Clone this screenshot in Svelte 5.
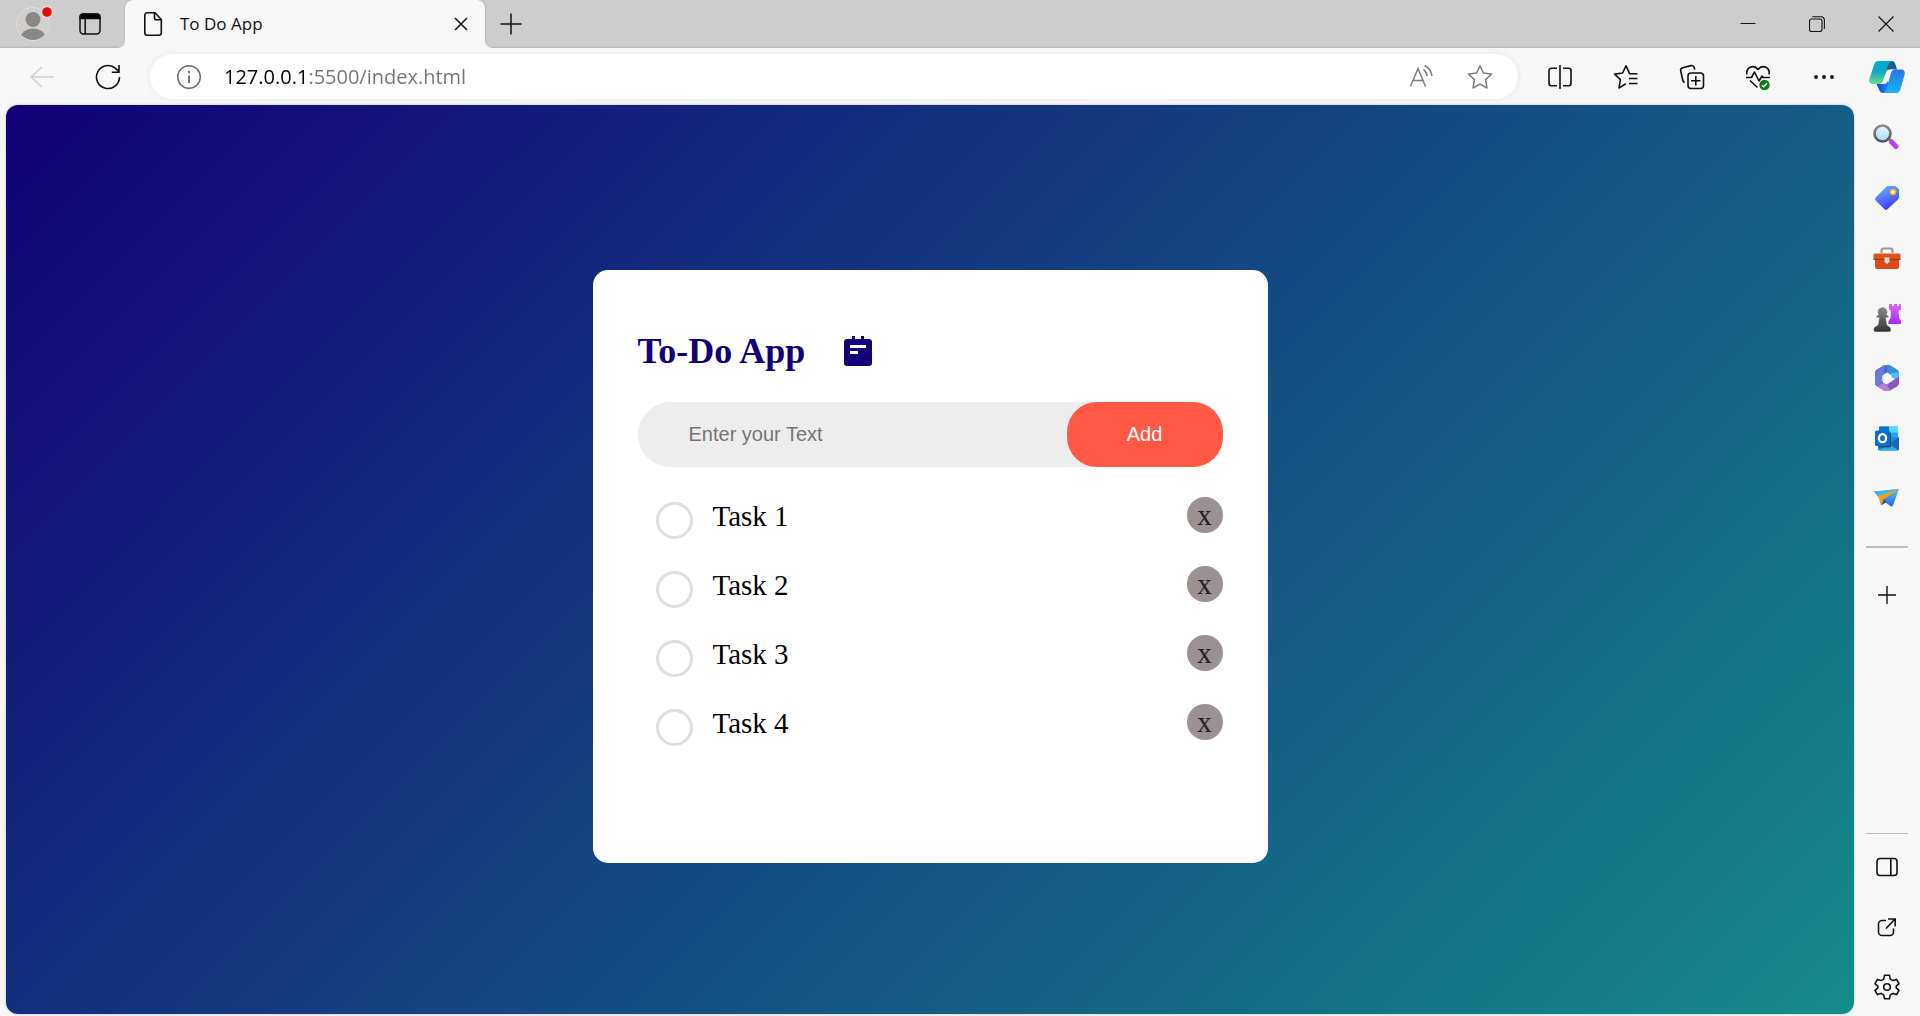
<script>
  let tasks = $state([
    { id: 1, title: 'Task 1', done: false },
    { id: 2, title: 'Task 2', done: false },
    { id: 3, title: 'Task 3', done: false },
    { id: 4, title: 'Task 4', done: false }
  ]);
  let draft = $state('');
  let address = $state('127.0.0.1:5500/index.html');

  function addTask(event) {
    event.preventDefault();
    const title = draft.trim();
    if (!title) return;
    tasks.push({ id: Date.now(), title, done: false });
    draft = '';
  }

  function removeTask(id) {
    tasks = tasks.filter((task) => task.id !== id);
  }
</script>

<div class="browser">
  <header class="tabstrip">
    <button class="profile" aria-label="Profile">
      <svg width="40" height="40" viewBox="0 0 40 40">
        <defs><clipPath id="face"><circle cx="20" cy="20" r="16" /></clipPath></defs>
        <circle cx="20" cy="20" r="16.5" fill="#d2d0cd" stroke="#dedddb" />
        <g clip-path="url(#face)" fill="#8a8886">
          <circle cx="20" cy="15.500" r="7.500" />
          <ellipse cx="20" cy="33.500" rx="12.500" ry="9" />
        </g>
        <circle cx="34" cy="8" r="6" fill="#f3dcdc" />
        <circle cx="34" cy="8" r="4.800" fill="#e00b0b" />
      </svg>
    </button>
    <button class="icon" aria-label="Tab actions">
      <svg width="24" height="24" viewBox="0 0 24 24" fill="none" stroke="#111" stroke-width="1.500">
        <rect x="2" y="2" width="20" height="20" rx="3.500" />
        <path d="M2 6.500V5a3 3 0 0 1 3-3h14a3 3 0 0 1 3 3v1.500z" fill="#000" />
        <path d="M7.200 7v15" />
      </svg>
    </button>
    <div class="tab">
      <svg width="24" height="26" viewBox="0 0 24 26" fill="none" stroke="#111" stroke-width="1.600" stroke-linejoin="round">
        <path d="M14 1.800H6A2.500 2.500 0 0 0 3.800 4v18A2.300 2.300 0 0 0 6 24.200h12a2.300 2.300 0 0 0 2.300-2.200V8.500z" />
        <path d="M13.500 2v5a1.800 1.800 0 0 0 1.800 1.800h5" />
      </svg>
      <span class="tab-title">To Do App</span>
      <button class="tab-close" aria-label="Close tab">
        <svg width="14" height="14" viewBox="0 0 14 14" fill="none" stroke="#111" stroke-width="1.500"><path d="M1 1l12 12M13 1L1 13" /></svg>
      </button>
    </div>
    <button class="new-tab" aria-label="New tab">
      <svg width="22" height="22" viewBox="0 0 22 22" fill="none" stroke="#111" stroke-width="1.500"><path d="M11 .5v21M.5 11h21" /></svg>
    </button>
    <div class="window-controls">
      <button aria-label="Minimize"><svg width="16" height="16" viewBox="0 0 16 16" stroke="#111" fill="none"><path d="M.5 7.500h15" /></svg></button>
      <button aria-label="Restore">
        <svg width="16" height="16" viewBox="0 0 16 16" stroke="#111" stroke-width="1.100" fill="none"><rect x=".5" y="3" width="12.500" height="12.500" rx="2" /><path d="M3.200.8h9a3.200 3.200 0 0 1 3.200 3.200v8.800" /></svg>
      </button>
      <button aria-label="Close"><svg width="16" height="16" viewBox="0 0 16 16" stroke="#111" stroke-width="1.200" fill="none"><path d="M.5.5l15 15M15.500.5l-15 15" /></svg></button>
    </div>
  </header>

  <nav class="toolbar">
    <button class="icon" aria-label="Back" disabled>
      <svg width="26" height="24" viewBox="0 0 26 24" fill="none" stroke="#cfcfcf" stroke-width="1.500"><path d="M13 2L2 12l11 10M2 12h23" /></svg>
    </button>
    <button class="icon" aria-label="Refresh">
      <svg width="26" height="26" viewBox="0 0 26 26" fill="none" stroke="#111" stroke-width="1.600"><path d="M24.500 13A11.500 11.500 0 1 1 20.500 4.300L24 7.600M24 1v7.200h-7.200" /></svg>
    </button>
    <div class="address">
      <button class="icon" aria-label="Site information">
        <svg width="26" height="26" viewBox="0 0 26 26" fill="none" stroke="#6c6c6c" stroke-width="1.500"><circle cx="13" cy="13" r="11.300" /><path d="M13 11.500v7.500" stroke-width="1.800" /><circle cx="13" cy="8" r="1.200" fill="#6c6c6c" stroke="none" /></svg>
      </button>
      <input class="url" type="text" aria-label="Address" bind:value={address} spellcheck="false" />
      <button class="icon" aria-label="Read aloud">
        <svg width="26" height="26" viewBox="0 0 26 26" fill="none" stroke="#7c7c7c" stroke-width="1.500"><path d="M2.500 22.500L10 4.500l7.500 18M5.200 16.500h9.600M15.500 5.700q3 1.800 3.600 6.300M16.500 1.500q6.500 3 7.500 10.500" /></svg>
      </button>
      <button class="icon" aria-label="Add to favorites">
        <svg width="26" height="26" viewBox="0 0 26 26" fill="none" stroke="#7c7c7c" stroke-width="1.500" stroke-linejoin="round"><path d="M13 1.800l3.400 7.200 8 1.100-5.800 5.500 1.400 8.400-7-3.900L6 24l1.400-8.400L1.600 10.100l8-1.100z" /></svg>
      </button>
    </div>
    <div class="tools">
      <button class="icon" aria-label="Split screen">
        <svg width="26" height="26" viewBox="0 0 26 26" fill="none" stroke="#111" stroke-width="1.600"><path d="M10 4.300H4.500a2.500 2.500 0 0 0-2.500 2.500v12.400a2.500 2.500 0 0 0 2.500 2.500H10M16 4.300h5.500A2.500 2.500 0 0 1 24 6.800v12.400a2.500 2.500 0 0 1-2.500 2.500H16M13 1v24" /></svg>
      </button>
      <button class="icon" aria-label="Favorites">
        <svg width="26" height="26" viewBox="0 0 26 26" fill="none" stroke="#111" stroke-width="1.600" stroke-linejoin="round"><path d="M24.500 9.800h-7.800L13 1.800 9.600 9l-8 1.100 5.800 5.500L6 24l6.800-4.200M16 14.500h8.500M16 19.500h8.500" /></svg>
      </button>
      <button class="icon" aria-label="Collections">
        <svg width="26" height="26" viewBox="0 0 26 26" fill="none" stroke="#111" stroke-width="1.600"><rect x="9" y="9" width="15.500" height="15.500" rx="3" /><path d="M16.800 12v9.500M12 16.800h9.500M5.500 18.500q-1.500-1-1.800-2.500L1.700 6.800A2.600 2.600 0 0 1 3.600 3.700L12 1.600a2.600 2.600 0 0 1 3.200 1.900l.5 2" /></svg>
      </button>
      <button class="icon" aria-label="Browser essentials">
        <svg width="26" height="26" viewBox="0 0 26 26" fill="none" stroke="#111" stroke-width="1.600" stroke-linejoin="round"><path d="M2 10.500C.5 4 8.500-.5 13 5.500 17.500-.5 25.500 4 24 10.500M1 13.500h5.500L9.500 8l4.500 9 3-5 1 1.500h7M5 16.500l7.500 7" /><circle cx="19.500" cy="21" r="5.200" fill="#107c10" stroke="none" /><path d="M17 21.200l1.700 1.600 3.300-3.500" stroke="#fff" stroke-width="1.400" /></svg>
      </button>
      <button class="icon" aria-label="Settings and more">
        <svg width="26" height="26" viewBox="0 0 26 26" fill="#111"><circle cx="5" cy="13" r="1.900" /><circle cx="13" cy="13" r="1.900" /><circle cx="21" cy="13" r="1.900" /></svg>
      </button>
    </div>
    <button class="icon copilot" aria-label="Copilot">
      <svg width="36" height="32" viewBox="0 0 36 32">
        <defs>
          <linearGradient id="cpA" x1="0" y1="0" x2="0" y2="1"><stop offset="0" stop-color="#04a9dc" /><stop offset=".45" stop-color="#12a5c8" /><stop offset="1" stop-color="#5fe08a" /></linearGradient>
          <linearGradient id="cpB" x1="0" y1="0" x2="0" y2="1"><stop offset="0" stop-color="#2477e0" /><stop offset="1" stop-color="#14b4fb" /></linearGradient>
          <linearGradient id="cpC" x1="0" y1="0" x2="1" y2="0"><stop offset="0" stop-color="#1743d5" /><stop offset="1" stop-color="#1b9cf5" /></linearGradient>
        </defs>
        <path d="M17 0h5.500a4 4 0 0 1 3.800 3L28 8.500h-5.500q-2.500 0-3.500 3L16 14z" fill="#125f88" />
        <path d="M7.500 23h6.500q3 0 4-4l5 7-4 6h-5a4 4 0 0 1-3.700-3z" fill="url(#cpC)" />
        <path d="M9 0h14q-3 .8-4 4l-4.500 15.500q-1.200 3.500-4.500 3.500H4Q-.5 23 .4 18L5 4Q6 0 9 0z" fill="url(#cpA)" />
        <path d="M27 32H14q2.500-.8 3.500-4L22 12q1-3.500 4.500-3.500h5.500q4.500 0 3.600 5L31.500 28q-1 4-4.500 4z" fill="url(#cpB)" />
        <path d="M19.500 8.500H24q-2 1-2.700 3.500L18.700 20q-1 3-4 3H9.500q3.500 0 4.700-3.500l3-9q.6-2 2.300-2z" fill="#f7f7f7" />
      </svg>
    </button>
  </nav>

  <div class="body">
    <main class="page">
      <section class="card">
        <h1 class="title">
          <span>To-Do App</span>
          <svg width="28" height="30" viewBox="0 0 28 30"><path fill="#120078" d="M8 0h3v3h6V0h3v3h5a3 3 0 0 1 3 3v21a3 3 0 0 1-3 3H3a3 3 0 0 1-3-3V6a3 3 0 0 1 3-3h5z" /><path fill="#fff" d="M6 9h16v3H6zM6 15h8v3H6z" /></svg>
        </h1>
        <form class="entry" onsubmit={addTask}>
          <input type="text" placeholder="Enter your Text" aria-label="Enter your Text" bind:value={draft} />
          <button type="submit">Add</button>
        </form>
        <ul class="tasks">
          {#each tasks as task (task.id)}
            <li>
              <input type="checkbox" id={`task-${task.id}`} bind:checked={task.done} />
              <label for={`task-${task.id}`}>{task.title}</label>
              <button class="remove" aria-label={`Remove ${task.title}`} onclick={() => removeTask(task.id)}>x</button>
            </li>
          {/each}
        </ul>
      </section>
    </main>

    <aside class="sidebar">
      <button aria-label="Search">
        <svg width="28" height="28" viewBox="0 0 28 28">
          <defs>
            <linearGradient id="lens" x1="0" y1="0" x2="0" y2="1"><stop offset="0" stop-color="#e8f5fd" /><stop offset="1" stop-color="#a9dbf7" /></linearGradient>
            <linearGradient id="ring" x1="0" y1="0" x2="0" y2="1"><stop offset="0" stop-color="#8a8a8a" /><stop offset="1" stop-color="#505050" /></linearGradient>
          </defs>
          <path d="M15 14l4 4" stroke="#777" stroke-width="3" />
          <path d="M18.500 18l4.500 4.500" stroke="#c03cf4" stroke-width="5" stroke-linecap="round" />
          <circle cx="9.500" cy="9.500" r="8" fill="url(#lens)" stroke="url(#ring)" stroke-width="2.600" />
        </svg>
      </button>
      <button aria-label="Shopping">
        <svg width="28" height="28" viewBox="0 0 28 28">
          <defs><linearGradient id="tag" x1=".2" y1="0" x2=".6" y2="1"><stop offset="0" stop-color="#66b2ff" /><stop offset="1" stop-color="#4436f5" /></linearGradient></defs>
          <path d="M15 2h7.500l3.500 3.500v7.500q0 1.500-1 2.500L14.500 25.300q-1.500 1.300-3 0L2.700 16.500q-1.500-1.500 0-3L13 3q.8-1 2-1z" fill="url(#tag)" />
          <circle cx="20" cy="8" r="2.400" fill="#fff" stroke="#f4bd1a" stroke-width="1.800" />
        </svg>
      </button>
      <button aria-label="Tools">
        <svg width="28" height="28" viewBox="0 0 28 28">
          <path d="M8.500 9V6.500q0-2 2-2h7q2 0 2 2V9" fill="none" stroke="#999" stroke-width="2.200" />
          <path d="M2 14h24v9q0 2-2 2H4q-2 0-2-2z" fill="#d9491d" />
          <path d="M2 9.500h24q1.500 0 1.500 1.500v4H.5v-4Q.5 9.500 2 9.500z" fill="#dc5717" />
          <path d="M.5 14.800h27v1.200H.5z" fill="#a83212" />
          <path d="M11.500 13.500h5V18l-2.500 2-2.500-2z" fill="#d5d8da" />
        </svg>
      </button>
      <button aria-label="Games">
        <svg width="28" height="28" viewBox="0 0 28 28">
          <defs>
            <linearGradient id="pawn" x1="0" y1="0" x2="0" y2="1"><stop offset="0" stop-color="#8c8c8c" /><stop offset="1" stop-color="#333" /></linearGradient>
            <linearGradient id="rook" x1="0" y1="0" x2="0" y2="1"><stop offset="0" stop-color="#d668f2" /><stop offset="1" stop-color="#a72af7" /></linearGradient>
          </defs>
          <path d="M16 0h3v2h2V0h3v2h2V0h2v5l-2.500 2 .5 7 2 3v3H15.500v-3l2-3 .5-7-2-2z" fill="url(#rook)" />
          <path d="M9.500 3a5 5 0 0 1 4.200 7.700l2 1.300v1.800h-2.800l1.200 7.200 3.400 2.500q.5.500.5 3.500-1 1-2 1H2.500Q.5 28 .5 26t1-3l3.400-2 1.200-7.200H3.300V12l2-1.300A5 5 0 0 1 9.500 3z" fill="url(#pawn)" stroke="#f7f7f7" stroke-width=".5" />
        </svg>
      </button>
      <button aria-label="Microsoft 365">
        <svg width="28" height="28" viewBox="0 0 28 28">
          <path d="M14 1q2-.5 4 .8l6 3.700q2 1.300 2 3.500v8l-8-4.200V11L14 8.500l-4.500 2L9 1.800z" fill="#3b8ede" />
          <path d="M18 9l8-1v9L17.800 12.500z" fill="#50c0ee" />
          <path d="M13.500 1Q11.500 1 10 2L4 5.500Q2 6.800 2 9v10q0 2.500 3 3.500l5-3.500v-8l4.500-3z" fill="#4a62cc" />
          <path d="M2 9q0-2 2-3.500L10 2q2-1 4-1-3 2-3 6v4.500L9.500 18 5 22.500Q2 21.500 2 19z" fill="#6d78dc" />
          <path d="M4 22.200q3 .5 6-3.200l4 1.500 5-3.500 7-4.500V19q0 2.300-2 3.500l-6.500 3.700q-3.500 1.800-7 0z" fill="#8659bd" />
          <path d="M4 22.200q3 .5 6-3.200l4 2 3.500 5.200q-3.500 1.800-7 0z" fill="#b483d4" />
          <path d="M14 9l4.700 2.700v5.200L14 19.500l-4.700-2.600v-5.200z" fill="#f7f7f7" />
        </svg>
      </button>
      <button aria-label="Outlook">
        <svg width="28" height="28" viewBox="0 0 28 28">
          <path d="M7 2.500h17q1 0 1 1V16H6V3.500q0-1 1-1z" fill="#28a8ea" />
          <path d="M7 2.500h9v6H6v-5q0-1 1-1z" fill="#0078d4" /><path d="M16 2.500h8q1 0 1 1v5h-9z" fill="#50d9ff" />
          <path d="M5 14l21-1v12q0 1.500-1.500 1.500H6.500Q5 26.500 5 25z" fill="#1490df" />
          <path d="M26 13.500L15.500 20 26 26z" fill="#1a66b8" /><path d="M16 20l9 6.500H6.500z" fill="#28a8ea" />
          <path d="M6 8h10q2 0 2 2v11q0 2.500-2.500 2.500H6z" fill="#114a7d" />
          <rect x="2" y="6.500" width="15" height="15.500" rx="1.500" fill="#0f6fc6" />
          <ellipse cx="9.500" cy="14.200" rx="3.600" ry="4" fill="none" stroke="#fff" stroke-width="2.300" />
        </svg>
      </button>
      <button aria-label="Drop">
        <svg width="28" height="28" viewBox="0 0 28 28">
          <defs><linearGradient id="plane" x1="0" y1="0" x2="0" y2="1"><stop offset="0" stop-color="#54c9f2" /><stop offset="1" stop-color="#2a5ee8" /></linearGradient></defs>
          <path d="M1 7.500L26 5 20 21.500q-1 1.500-2.500.5L11 17.500 4.500 12z" fill="url(#plane)" />
          <path d="M26 5L5 11.800 8 21.500 11 15z" fill="#f2a013" />
          <path d="M8 21.500L11 15l2.500 3z" fill="#284ba8" />
          <path d="M1 7.500L26 5 5 11.800z" fill="#43b4e8" />
        </svg>
      </button>
      <hr class="thick" />
      <button aria-label="Customize sidebar">
        <svg width="20" height="20" viewBox="0 0 20 20" fill="none" stroke="#111" stroke-width="1.400"><path d="M10 1v18M1 10h18" /></svg>
      </button>
      <div class="spacer"></div>
      <hr />
      <button aria-label="Hide sidebar">
        <svg width="24" height="24" viewBox="0 0 24 24" fill="none" stroke="#111" stroke-width="1.600"><rect x="2" y="3.500" width="20" height="17" rx="3" /><path d="M15.800 3.500v17" /></svg>
      </button>
      <button aria-label="Open in new window">
        <svg width="24" height="24" viewBox="0 0 24 24" fill="none" stroke="#111" stroke-width="1.600"><path d="M11 5.500H7A3.500 3.500 0 0 0 3.500 9v8A3.500 3.500 0 0 0 7 20.500h8a3.500 3.500 0 0 0 3.500-3.500v-3.500M13 4h7.200v7.500M20 4l-9 9.500" /></svg>
      </button>
      <button aria-label="Settings">
        <svg width="28" height="28" viewBox="0 0 28 28" fill="none" stroke="#111" stroke-width="1.600" stroke-linejoin="round"><circle cx="14" cy="14" r="3.300" /><path d="M11.500 2.300h5l.8 3.800 2.700 1.500 3.600-1.200 2.400 4.200-2.800 2.600v1.600l2.800 2.600-2.400 4.200-3.600-1.200-2.700 1.500-.8 3.800h-5l-.8-3.800L8 20.400l-3.600 1.200L2 17.400l2.800-2.600v-1.600L2 10.600l2.400-4.200L8 7.600l2.700-1.500z" /></svg>
      </button>
    </aside>
  </div>
</div>

<style>
  :global(body) {
    margin: 0;
  }
  .browser {
    display: flex;
    flex-direction: column;
    min-height: 100vh;
    background: #f7f7f7;
    font-family: 'Open Sans', 'Noto Sans', sans-serif;
    color: #111;
  }
  button {
    display: flex;
    align-items: center;
    justify-content: center;
    padding: 0;
    border: 0;
    background: none;
    font: inherit;
    color: inherit;
    cursor: pointer;
  }
  svg {
    display: block;
    flex: none;
  }
  .icon {
    flex: none;
    width: 40px;
    height: 40px;
  }

  .tabstrip {
    display: flex;
    align-items: center;
    height: 48px;
    padding-left: 13px;
    background: #cdcdcd;
    box-shadow: inset 0 -2px 2px -1px #b4b4b4;
  }
  .profile {
    width: 40px;
    height: 40px;
    margin-right: 17px;
  }
  .tab {
    position: relative;
    display: flex;
    align-items: center;
    box-sizing: border-box;
    width: 360px;
    height: 48px;
    margin-left: 15px;
    padding: 0 17px 0 16px;
    background: #f7f7f7;
    border-radius: 8px 8px 0 0;
    box-shadow: 0 0 2px #999;
    clip-path: inset(0 -6px 0 -6px);
  }
  .tab::before,
  .tab::after {
    content: '';
    position: absolute;
    bottom: 0;
    width: 6px;
    height: 6px;
  }
  .tab::before {
    right: 100%;
    background: radial-gradient(circle at 0 0, transparent 5px, #f7f7f7 6px);
  }
  .tab::after {
    left: 100%;
    background: radial-gradient(circle at 100% 0, transparent 5px, #f7f7f7 6px);
  }
  .tab-title {
    flex: 1;
    padding-left: 15px;
    font-size: 17px;
    line-height: 24px;
  }
  .tab-close {
    width: 14px;
    height: 24px;
  }
  .new-tab {
    width: 22px;
    height: 40px;
    margin-left: 15px;
  }
  .window-controls {
    display: flex;
    margin-left: auto;
  }
  .window-controls button {
    width: 69px;
    height: 48px;
  }

  .toolbar {
    display: flex;
    align-items: center;
    height: 57px;
    padding: 0 13px 0 22px;
  }
  .toolbar > .icon + .icon {
    margin-left: 26px;
  }
  .address {
    display: flex;
    flex: 1;
    align-items: center;
    height: 45px;
    margin-left: 22px;
    padding: 0 18px 0 19px;
    background: #fff;
    border-radius: 24px;
    box-shadow: 0 0 6px #e6e6e6;
  }
  .address .icon + .icon {
    margin-left: 19px;
  }
  .url {
    flex: 1;
    min-width: 0;
    height: 40px;
    padding: 0 15px;
    border: 0;
    outline: 0;
    font: inherit;
    font-size: 20px;
    /* host name in black, the rest of the address in grey */
    color: transparent;
    caret-color: #111;
    background: linear-gradient(90deg, #000 99px, #747474 99px);
    -webkit-background-clip: text;
    background-clip: text;
  }
  .tools {
    display: flex;
    gap: 26px;
    margin-left: 22px;
  }
  .copilot {
    margin-left: 23px;
  }

  .body {
    display: flex;
    flex: 1;
  }
  .page {
    flex: 1;
    margin: 0 0 2px 6px;
    padding: 165px 20px 20px;
    border-radius: 12px;
    background: linear-gradient(135deg, #120078, #158b8b);
    box-shadow: 0 0 3px #bbb;
    font-family: 'Liberation Serif', 'Times New Roman', serif;
  }
  .card {
    box-sizing: border-box;
    width: 100%;
    max-width: 675px;
    margin: 0 auto;
    padding: 60px 45px 117px;
    border-radius: 15px;
    background: #fff;
  }
  .title {
    display: flex;
    align-items: center;
    gap: 39px;
    margin: 0 0 30px;
    font-size: 36px;
    line-height: 42px;
    font-weight: 700;
    color: #120078;
  }
  .entry {
    display: flex;
    height: 65px;
    border-radius: 33px;
    background: #ededed;
  }
  .entry input {
    flex: 1;
    min-width: 0;
    padding: 0 16px 0 51px;
    border: 0;
    outline: 0;
    background: none;
    font-family: 'Liberation Sans', Arial, sans-serif;
    font-size: 20px;
  }
  .entry input::placeholder {
    color: #757575;
  }
  .entry button {
    width: 156px;
    border-radius: 30px;
    background: #ff5945;
    font-family: 'Liberation Sans', Arial, sans-serif;
    font-size: 20px;
    color: #fff;
  }
  .tasks {
    display: flex;
    flex-direction: column;
    gap: 27px;
    margin: 30px 0 0;
    padding: 0 0 0 18px;
    list-style: none;
  }
  .tasks li {
    display: flex;
    align-items: flex-start;
  }
  .tasks input {
    appearance: none;
    flex: none;
    box-sizing: border-box;
    width: 37px;
    height: 37px;
    margin: 5px 20px 0 0;
    border: 3px solid #dedede;
    border-radius: 50%;
  }
  .tasks input:checked {
    background: #ff5945;
  }
  .tasks label {
    flex: 1;
    font-size: 29px;
    line-height: 39px;
    color: #000;
  }
  .remove {
    width: 36px;
    height: 36px;
    border-radius: 50%;
    background: #9a9192;
    font-size: 29px;
    line-height: 36px;
    color: #222;
  }

  .sidebar {
    display: flex;
    flex-direction: column;
    align-items: center;
    gap: 2px;
    width: 66px;
    padding-top: 4px;
  }
  .sidebar button {
    width: 58px;
    height: 58px;
  }
  hr {
    width: 42px;
    height: 1px;
    margin: 0 0 2px;
    border: 0;
    background: #bdbdbd;
  }
  .thick {
    height: 2px;
    margin: 17px 0 16px;
  }
  .spacer {
    flex: 1;
  }
</style>
